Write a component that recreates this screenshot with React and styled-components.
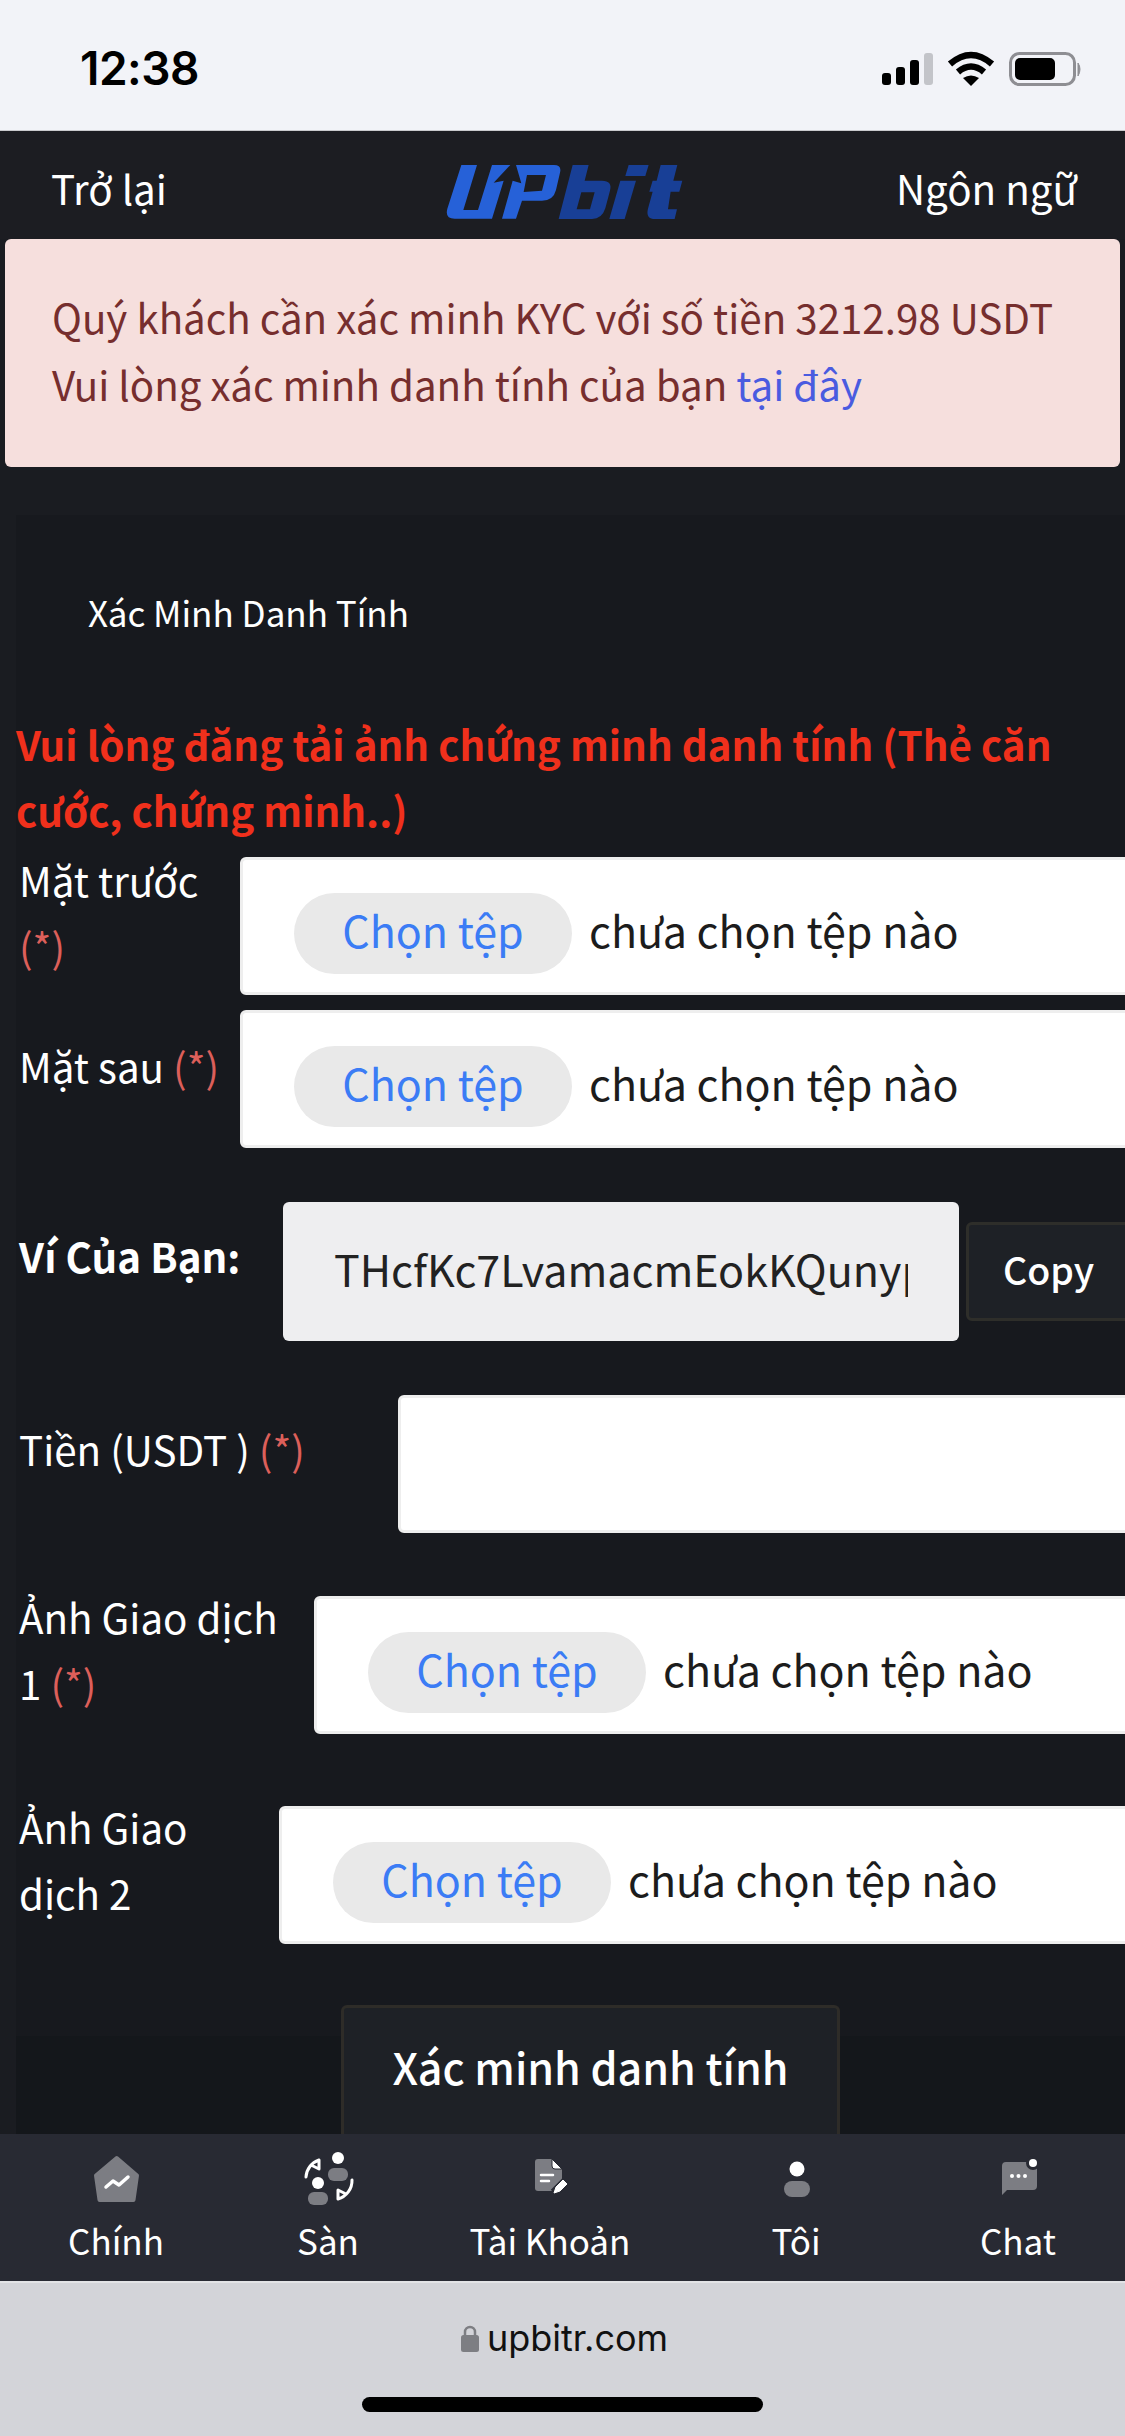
import styled, { createGlobalStyle } from 'styled-components';

const GlobalStyle = createGlobalStyle`
  html, body {
    margin: 0;
    padding: 0;
    background: #1a1c21;
  }
  * {
    box-sizing: border-box;
  }
`;

const Screen = styled.div`
  width: 1125px;
  height: 2436px;
  display: flex;
  flex-direction: column;
  overflow: hidden;
  background: #1a1c21;
  color: #fff;
  font-family: 'Noto Sans CJK SC', 'Noto Sans', sans-serif;
  font-size: 40.3px;
  line-height: 66px;
`;

const StatusBar = styled.div`
  flex: none;
  height: 131px;
  display: flex;
  align-items: flex-start;
  justify-content: space-between;
  padding: 50px 40px 0 80px;
  background: #f2f3f8;
  border-bottom: 1px solid #c9cacd;
`;

const Clock = styled.div`
  font-family: Inter, 'Liberation Sans', sans-serif;
  font-size: 46px;
  font-weight: 600;
  line-height: 36px;
  letter-spacing: -0.5px;
  color: #000;
`;

const Header = styled.div`
  flex: none;
  height: 108px;
  display: grid;
  grid-template-columns: 1fr 245px 1fr;
  align-items: center;
  padding: 6px 48px 0 51px;
  background: #1c1d22;
`;

const HeaderLink = styled.a`
  color: #fff;
  text-align: ${(props) => (props.$right ? 'right' : 'left')};
`;

const LogoMark = styled.svg`
  display: block;
  width: 245px;
  height: 64px;
  margin-top: 8px;
`;

const Content = styled.div`
  flex: 1;
  min-height: 0;
  overflow: hidden;
`;

const Alert = styled.div`
  margin: 0 5px;
  height: 228px;
  padding: 44px 47px 0;
  background: #f6dfdd;
  border-radius: 6px;
  color: #762e2e;
  line-height: 67px;
`;

const AlertLink = styled.a`
  color: #4a5be0;
`;

const Card = styled.div`
  margin: 48px 0 0 16px;
  height: 1700px;
  background: linear-gradient(#17191e 0 1521px, #14171b 1521px);
`;

const CardTitle = styled.div`
  padding: 70px 0 0 72px;
  font-size: 35px;
  line-height: 54px;
`;

const Notice = styled.div`
  margin-top: 72px;
  font-weight: 700;
  color: #f0301c;
`;

const Row = styled.div`
  display: flex;
  align-items: flex-start;
  width: 1400px;
  padding-left: 3px;
  margin-top: ${(props) => props.$gap}px;
`;

const Label = styled.div`
  flex: none;
  width: ${(props) => props.$width}px;
  padding-right: 20px;
  margin-top: ${(props) => props.$offset}px;
  font-weight: ${(props) => (props.$bold ? 700 : 400)};
`;

const Required = styled.span`
  color: #dc5f5a;
`;

const FileField = styled.div`
  flex: none;
  width: 1000px;
  height: 138px;
  display: flex;
  align-items: flex-start;
  padding: 33px 0 0 51px;
  background: #fff;
  border: 3px solid #eeeeee;
  border-radius: 6px;
  color: #1c1c1c;
  font-size: 43px;
`;

const FileButton = styled.div`
  flex: none;
  width: 278px;
  height: 81px;
  border-radius: 41px;
  background: #e9e9e9;
  color: #3b7cf5;
  text-align: center;
  line-height: 73px;
`;

const FileHint = styled.div`
  margin-left: 17px;
  line-height: 73px;
`;

const WalletInput = styled.input`
  flex: none;
  width: 676px;
  height: 139px;
  padding: 0 51px 8px;
  background: #eeeef0;
  border: none;
  border-radius: 6px;
  outline: none;
  color: #222;
  font: inherit;
  font-size: 43px;
`;

const CopyButton = styled.button`
  flex: none;
  width: 200px;
  height: 99px;
  margin: 20px 0 0 7px;
  padding: 0 0 6px 34px;
  text-align: left;
  background: #1e2126;
  border: 3px solid #2e2e2a;
  border-radius: 6px;
  color: #fff;
  font: inherit;
  font-size: 37.5px;
  font-weight: 500;
`;

const AmountInput = styled.input`
  flex: none;
  width: 1000px;
  height: 138px;
  background: #fff;
  border: 3px solid #eeeeee;
  border-radius: 6px;
  outline: none;
`;

const SubmitButton = styled.button`
  display: flex;
  justify-content: center;
  align-items: flex-start;
  width: 499px;
  height: 160px;
  margin: 61px 0 0 325px;
  padding: 22px 0 0;
  background: #1e2126;
  border: 3px solid #2e2c28;
  border-bottom: none;
  border-radius: 6px 6px 0 0;
  color: #fff;
  font-family: inherit;
  font-size: 43px;
  font-weight: 500;
  line-height: 72px;
`;

const TabBar = styled.div`
  flex: none;
  height: 147px;
  display: grid;
  grid-template-columns: 232px 192px 252px 240px 204px;
  padding-top: 16px;
  background: #282a33;
`;

const Tab = styled.div`
  display: flex;
  flex-direction: column;
  align-items: center;
  font-size: 35px;
  line-height: 50px;
  color: #fff;
`;

const TabIcon = styled.svg`
  display: block;
  width: 60px;
  height: 60px;
  margin-bottom: 5px;
`;

const AddressBar = styled.div`
  flex: none;
  height: 155px;
  display: flex;
  flex-direction: column;
  align-items: center;
  padding-top: 33px;
  background: #d3d4d9;
  border-top: 2px solid #e2e3e6;
`;

const Address = styled.div`
  display: flex;
  align-items: center;
  gap: 8px;
  height: 44px;
  padding-left: 4px;
  font-family: Inter, 'Liberation Sans', sans-serif;
  font-size: 36px;
  line-height: 44px;
  color: #111;
`;

const HomeIndicator = styled.div`
  width: 401px;
  height: 15px;
  margin-top: 37px;
  border-radius: 8px;
  background: #000;
`;

const StatusIcons = () => (
  <svg width="205" height="38" viewBox="880 50 205 38">
    <rect x="882" y="73" width="9" height="12" rx="3" fill="#000" />
    <rect x="896" y="67" width="9" height="18" rx="3" fill="#000" />
    <rect x="910" y="60" width="9" height="25" rx="3" fill="#000" />
    <rect x="924" y="53" width="9" height="32" rx="3" fill="#c3c4c9" />
    <path d="M950 64 Q971 46 992 64" fill="none" stroke="#000" strokeWidth="6.5" />
    <path d="M958 72 Q971 61 984 72" fill="none" stroke="#000" strokeWidth="6.5" />
    <path d="M963 78 Q971 73 979 78 L971 86 Z" fill="#000" />
    <rect x="1010.5" y="53.5" width="64" height="31" rx="9" fill="none" stroke="#8e8e93" strokeWidth="3" />
    <rect x="1015" y="58" width="40" height="22" rx="5" fill="#000" />
    <path d="M1078 63 Q1082 69 1078 76 Z" fill="#8e8e93" stroke="#8e8e93" strokeWidth="1" />
  </svg>
);

const Logo = () => (
  <LogoMark viewBox="440 160 245 64">
    {/* U and P, traced from the brand mark */}
    <g transform="translate(440 160) scale(0.3333)" fill="#2661d8">
      <path d="M58 15 L105 15 L64 150 L108 150 L150 15 L205 15 L155 68 L185 62 L150 176 L38 176 Q8 176 16 146 Z" />
      <path
        fillRule="evenodd"
        d="M222 15 L336 15 Q360 15 354 38 L342 90 Q334 122 300 122 L240 122 L222 176 L180 176 L212 62 L238 70 Z M255 45 L312 45 L300 92 L245 96 Z"
      />
    </g>
    <g transform="translate(400 140) scale(0.3333)" fill="#183f96">
      <path
        fillRule="evenodd"
        d="M512 75 L560 75 L548 122 L600 122 Q632 122 624 152 L610 205 Q600 237 570 237 L470 237 Z M538 157 L578 157 L564 208 L524 208 Z"
      />
      <path d="M655 122 L702 122 L668 237 L622 237 Z" />
      <path d="M680 75 L740 75 L730 108 L670 108 Z" />
      <path d="M776 75 L826 75 L814 122 L841 122 L832 155 L806 155 L798 208 L825 208 L818 237 L760 237 Q730 237 738 206 L752 155 L742 155 L752 122 L764 122 Z" />
    </g>
  </LogoMark>
);

const Lock = () => (
  <svg width="18" height="28" viewBox="0 0 18 28">
    <path d="M4 12 V8 A5 5 0 0 1 14 8 V12" fill="none" stroke="#7d7e83" strokeWidth="2.5" />
    <rect x="0" y="11" width="18" height="17" rx="2.5" fill="#7d7e83" />
  </svg>
);

const HomeGlyph = () => (
  <TabIcon viewBox="-2 -2 60 60">
    <path d="M28.7 6 L49 23.5 L45.5 48 H11.5 L8 23.5 Z" fill="#7c7d83" stroke="#7c7d83" strokeWidth="4" strokeLinejoin="round" />
    <path d="M18 35 L25 29 L31 33 L40 25" fill="none" stroke="#fff" strokeWidth="3.5" strokeLinecap="round" strokeLinejoin="round" />
  </TabIcon>
);

const MarketGlyph = () => (
  <TabIcon viewBox="-2 -2 60 60">
    <circle cx="38" cy="6" r="6" fill="#fff" />
    <rect x="28" y="16" width="20" height="13" rx="6" fill="#7c7d83" />
    <circle cx="18" cy="31" r="6" fill="#fff" />
    <rect x="8" y="40" width="20" height="13" rx="6" fill="#7c7d83" />
    <path d="M6 25 A19 19 0 0 1 19 8 V17 L11 13" fill="none" stroke="#fff" strokeWidth="3" strokeLinecap="round" strokeLinejoin="round" />
    <path d="M52 28 A19 19 0 0 1 38 47 V38 L46 42" fill="none" stroke="#fff" strokeWidth="3" strokeLinecap="round" strokeLinejoin="round" />
  </TabIcon>
);

const AccountGlyph = () => (
  <TabIcon viewBox="-5 2 60 60">
    <path d="M13 11 H27 L37 21 V40 Q37 43 34 43 H13 Q10 43 10 40 V14 Q10 11 13 11 Z" fill="#7c7d83" />
    <path d="M27 11 L37 21 H30 Q27 21 27 18 Z" fill="#fff" stroke="#282a33" strokeWidth="1" />
    <path d="M16 27 H28 M16 33 H24" stroke="#fff" strokeWidth="2.5" strokeLinecap="round" />
    <path d="M29 45 L41 33" stroke="#282a33" strokeWidth="9" />
    <path d="M29 45 L31 39 L38 32 L42 36 L35 43 Z" fill="#fff" stroke="#fff" strokeWidth="1" strokeLinejoin="round" />
  </TabIcon>
);

const UserGlyph = () => (
  <TabIcon viewBox="0 0 60 60">
    <circle cx="31" cy="19" r="7.5" fill="#fff" />
    <rect x="18" y="31" width="26" height="16" rx="8" fill="#7c7d83" />
  </TabIcon>
);

const ChatGlyph = () => (
  <TabIcon viewBox="0 0 60 60">
    <path d="M18 12 H45 Q49 12 49 16 V36 Q49 40 45 40 H19 L14 45 V16 Q14 12 18 12 Z" fill="#7c7d83" />
    <circle cx="24" cy="26" r="2" fill="#fff" />
    <circle cx="30.5" cy="26" r="2" fill="#fff" />
    <circle cx="37" cy="26" r="2" fill="#fff" />
    <circle cx="45" cy="13" r="7" fill="#282a33" />
    <circle cx="45" cy="13" r="4" fill="#fff" />
  </TabIcon>
);

const tabs = [
  { label: 'Chính', Icon: HomeGlyph },
  { label: 'Sàn', Icon: MarketGlyph },
  { label: 'Tài Khoản', Icon: AccountGlyph },
  { label: 'Tôi', Icon: UserGlyph },
  { label: 'Chat', Icon: ChatGlyph },
];

const FileInput = () => (
  <FileField>
    <FileButton>Chọn tệp</FileButton>
    <FileHint>chưa chọn tệp nào</FileHint>
  </FileField>
);

const App = () => (
  <Screen>
    <GlobalStyle />
    <StatusBar>
      <Clock>12:38</Clock>
      <StatusIcons />
    </StatusBar>

    <Header>
      <HeaderLink>Trở lại</HeaderLink>
      <Logo />
      <HeaderLink $right>Ngôn ngữ</HeaderLink>
    </Header>

    <Content>
      <Alert>
        Quý khách cần xác minh KYC với số tiền 3212.98 USDT
        <br />
        Vui lòng xác minh danh tính của bạn <AlertLink>tại đây</AlertLink>
      </Alert>

      <Card>
        <CardTitle>Xác Minh Danh Tính</CardTitle>
        <Notice>
          Vui lòng đăng tải ảnh chứng minh danh tính (Thẻ căn
          <br />
          cước, chứng minh..)
        </Notice>

        <Row $gap={14}>
          <Label $width={221} $offset={-10}>
            Mặt trước <Required>(*)</Required>
          </Label>
          <FileInput />
        </Row>
        <Row $gap={15}>
          <Label $width={221} $offset={23}>
            Mặt sau <Required>(*)</Required>
          </Label>
          <FileInput />
        </Row>
        <Row $gap={54}>
          <Label $width={264} $offset={21} $bold>
            Ví Của Bạn:
          </Label>
          <WalletInput readOnly value="THcfKc7LvamacmEokKQunypZx4" />
          <CopyButton>Copy</CopyButton>
        </Row>
        <Row $gap={54}>
          <Label $width={379} $offset={21}>
            Tiền (USDT ) <Required>(*)</Required>
          </Label>
          <AmountInput />
        </Row>
        <Row $gap={63}>
          <Label $width={295} $offset={-12}>
            Ảnh Giao dịch 1 <Required>(*)</Required>
          </Label>
          <FileInput />
        </Row>
        <Row $gap={72}>
          <Label $width={260} $offset={-12}>
            Ảnh Giao dịch 2
          </Label>
          <FileInput />
        </Row>
        <SubmitButton>Xác minh danh tính</SubmitButton>
      </Card>
    </Content>

    <TabBar>
      {tabs.map(({ label, Icon }) => (
        <Tab key={label}>
          <Icon />
          {label}
        </Tab>
      ))}
    </TabBar>

    <AddressBar>
      <Address>
        <Lock />
        upbitr.com
      </Address>
      <HomeIndicator />
    </AddressBar>
  </Screen>
);

export default App;
